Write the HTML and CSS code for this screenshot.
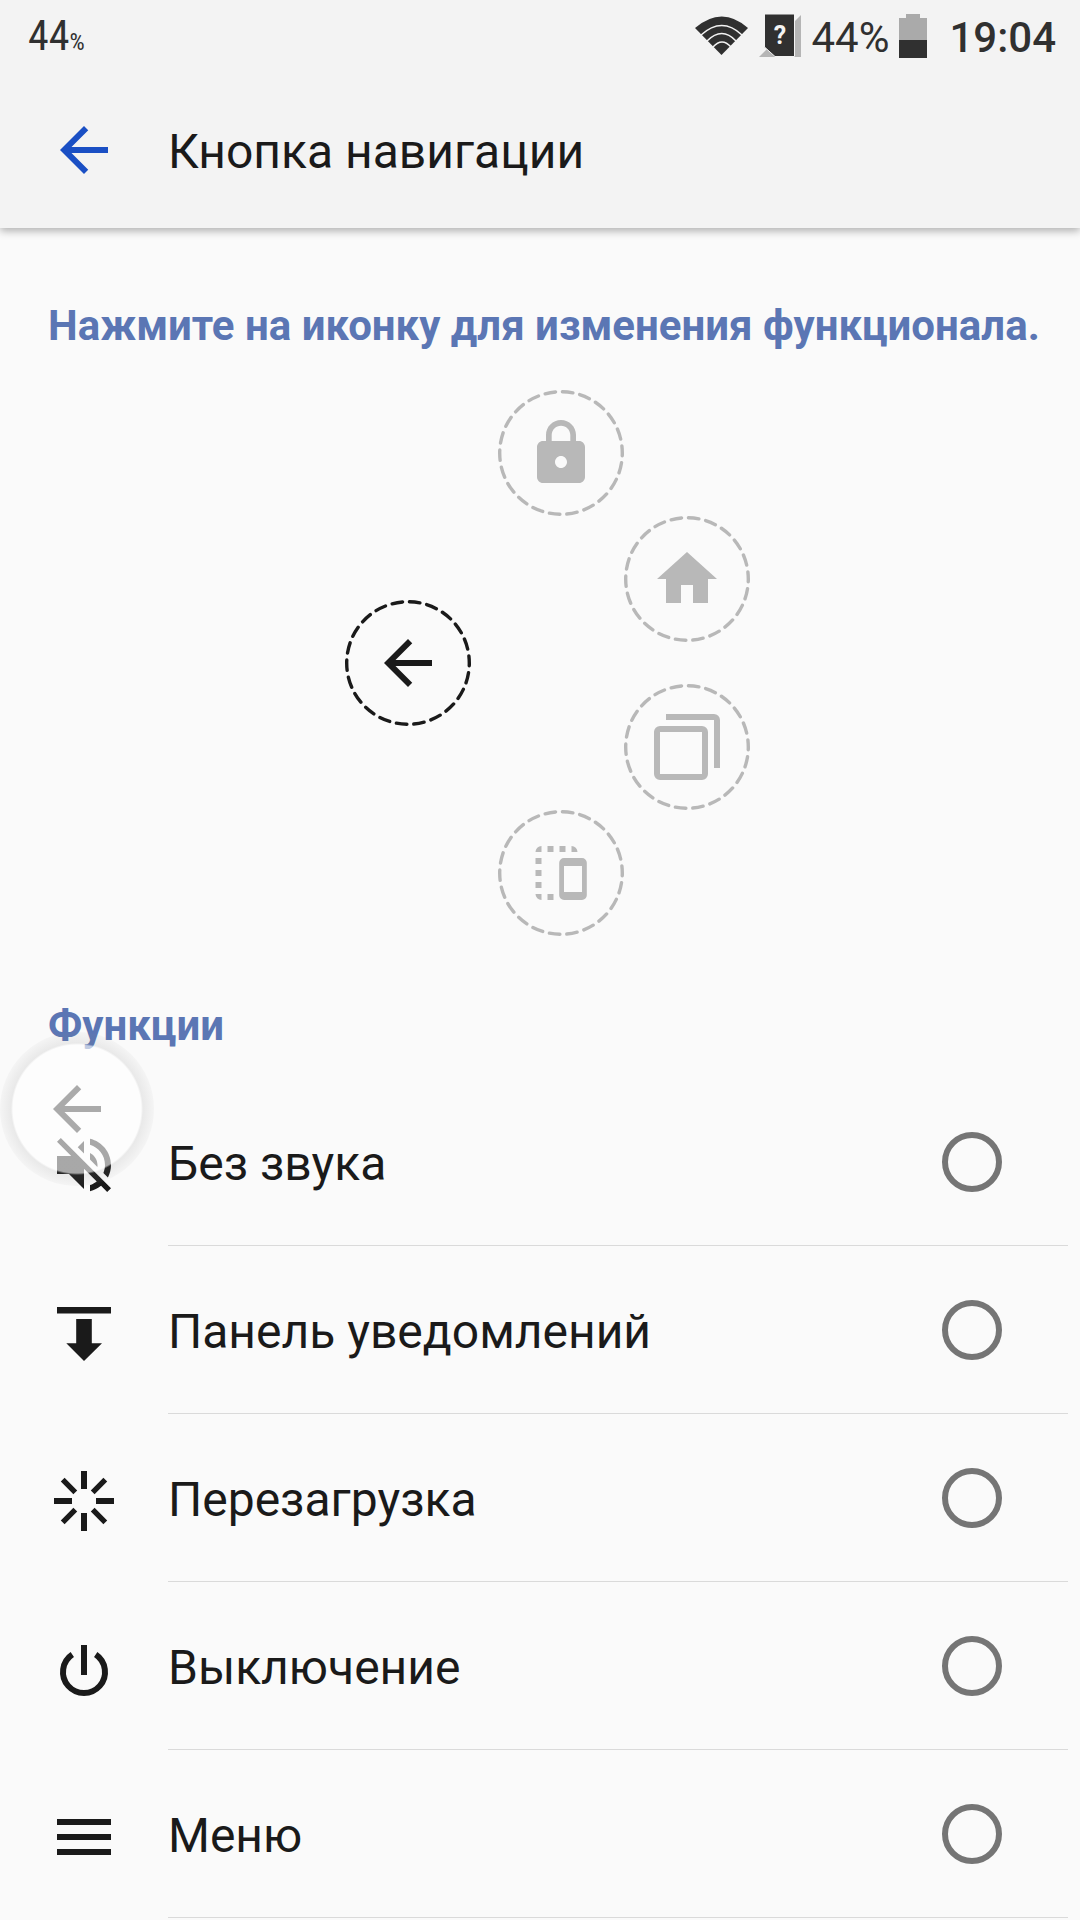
FILE: index.html
```html
<!DOCTYPE html>
<html lang="ru">
<head>
<meta charset="utf-8">
<meta name="viewport" content="width=device-width, initial-scale=1">
<title>Кнопка навигации</title>
<link rel="stylesheet" href="styles.css">
</head>
<body>
<header class="header">
  <div class="status">
    <span class="status-left">44<span class="status-unit">%</span></span>
    <div class="status-right">
      <svg class="wifi" viewBox="0 0 54 40" aria-hidden="true">
        <path fill="#303030" d="M0 12Q27 -11 53 12L26.500 39z"/>
        <g fill="none" stroke="#f3f3f3" stroke-width="1.5">
          <path d="M6 19Q27 0 47 19"/><path d="M12 25Q27 10 41 25"/><path d="M18 31Q27 21 36 31"/>
        </g>
      </svg>
      <svg class="sim" viewBox="0 0 42 44" aria-hidden="true">
        <path fill="#b5b5b5" d="M42 1v42H0z"/>
        <path fill="#303030" stroke="#f3f3f3" stroke-width="1" d="M5.500 0h30v42.500H16L5.500 33z"/>
        <text class="sim-mark" x="21" y="30" text-anchor="middle">?</text>
      </svg>
      <span class="status-percent">44%</span>
      <svg class="battery" viewBox="0 0 28 44" aria-hidden="true">
        <path fill="#aaa" d="M7 0h14v4h7v23H0V4h7z"/><path fill="#303030" d="M0 26h28v18H0z"/>
      </svg>
      <time class="clock">19:04</time>
    </div>
  </div>
  <div class="toolbar">
    <button class="back" type="button" aria-label="Назад">
      <svg class="icon" viewBox="0 0 24 24"><path d="M20 11H7.83l5.59-5.59L12 4l-8 8 8 8 1.41-1.41L7.83 13H20z"/></svg>
    </button>
    <h1 class="title">Кнопка навигации</h1>
  </div>
</header>
<main class="content">
  <h2 class="heading">Нажмите на иконку для изменения функционала.</h2>
  <div class="pad">
    <button class="node node-back" type="button" aria-label="Назад">
      <svg class="ring" viewBox="0 0 126 126"><circle cx="63" cy="63" r="61.3"/></svg>
      <svg class="icon" viewBox="0 0 24 24"><path d="M20 11H7.83l5.59-5.59L12 4l-8 8 8 8 1.41-1.41L7.83 13H20z"/></svg>
    </button>
    <button class="node node-lock" type="button" aria-label="Блокировка">
      <svg class="ring" viewBox="0 0 126 126"><circle cx="63" cy="63" r="61.3"/></svg>
      <svg class="icon" viewBox="0 0 24 24"><path d="M18 8h-1V6c0-2.76-2.24-5-5-5S7 3.24 7 6v2H6c-1.1 0-2 .9-2 2v10c0 1.1.9 2 2 2h12c1.1 0 2-.9 2-2V10c0-1.1-.9-2-2-2zm-6 9c-1.1 0-2-.9-2-2s.9-2 2-2 2 .9 2 2-.9 2-2 2zm3.1-9H8.9V6c0-1.71 1.39-3.1 3.1-3.1 1.71 0 3.1 1.39 3.1 3.1z"/></svg>
    </button>
    <button class="node node-home" type="button" aria-label="Домой">
      <svg class="ring" viewBox="0 0 126 126"><circle cx="63" cy="63" r="61.3"/></svg>
      <svg class="icon" viewBox="0 0 24 24"><path d="M10 20v-6h4v6h5v-8h3L12 3 2 12h3v8z"/></svg>
    </button>
    <button class="node node-recent" type="button" aria-label="Недавние">
      <svg class="ring" viewBox="0 0 126 126"><circle cx="63" cy="63" r="61.3"/></svg>
      <svg class="icon" viewBox="0 0 24 24"><path fill-rule="evenodd" d="M5 1h16a2 2 0 0 1 2 2v16h-2V3H5zM3 5h14a2 2 0 0 1 2 2v14a2 2 0 0 1-2 2H3a2 2 0 0 1-2-2V7a2 2 0 0 1 2-2zm0 2v14h14V7z"/></svg>
    </button>
    <button class="node node-mini" type="button" aria-label="Мини-экран">
      <svg class="ring" viewBox="0 0 126 126"><circle cx="63" cy="63" r="61.3"/></svg>
      <svg class="icon" viewBox="0 0 24 24"><path fill-rule="evenodd" d="M3.5 5a2 2 0 0 1 2-2v2zM7.5 3h2v2h-2zM11.5 3h2v2h-2zM15.5 3a2 2 0 0 1 2 2h-2zM3.5 7h2v2h-2zM3.5 11h2v2h-2zM3.5 15h2v2h-2zM3.5 19h2v2a2 2 0 0 1-2-2zM7.5 19h2v2h-2zM13 7h6a1.6 1.6 0 0 1 1.6 1.6v10.8A1.6 1.6 0 0 1 19 21h-6a1.6 1.6 0 0 1-1.6-1.6V8.600A1.6 1.6 0 0 1 13 7zm0 2.650v8.700h6V9.650z"/></svg>
    </button>
  </div>
  <h2 class="heading">Функции</h2>
  <ul class="list">
    <li><label class="row">
      <svg class="icon row-icon" viewBox="0 0 24 24"><path d="M16.500 12c0-1.770-1.020-3.290-2.500-4.030v2.210l2.450 2.450c.03-.2.05-.41.05-.63zm2.500 0c0 .94-.2 1.820-.54 2.640l1.510 1.510C20.630 14.910 21 13.500 21 12c0-4.280-2.990-7.860-7-8.770v2.060c2.890.86 5 3.540 5 6.710zM4.270 3L3 4.270 7.730 9H3v6h4l5 5v-6.730l4.250 4.250c-.67.52-1.420.93-2.250 1.180v2.060c1.380-.31 2.630-.95 3.690-1.810L19.730 21 21 19.730l-9-9zM12 4L9.910 6.090 12 8.180z"/></svg>
      <span class="row-body"><span class="row-text">Без звука</span><input class="radio" type="radio" name="action"></span>
    </label></li>
    <li><label class="row">
      <svg class="icon row-icon" viewBox="0 0 24 24"><path d="M3 3.300h18v2.200H3zM9.400 7.300h5.200v8.100h3.400l-6 5.900-5.900-5.900h3.300z"/></svg>
      <span class="row-body"><span class="row-text">Панель уведомлений</span><input class="radio" type="radio" name="action"></span>
    </label></li>
    <li><label class="row">
      <svg class="icon row-icon" viewBox="0 0 24 24"><path d="M11 2h2v6h-2zM11 16h2v6h-2zM2 11h6v2H2zM16 11h6v2h-6z"/><path fill="none" stroke="currentColor" stroke-width="1.800" d="M4.900 4.900l4.200 4.200M19.100 4.900l-4.200 4.200M4.900 19.100l4.200-4.200M19.100 19.100l-4.200-4.200"/></svg>
      <span class="row-body"><span class="row-text">Перезагрузка</span><input class="radio" type="radio" name="action"></span>
    </label></li>
    <li><label class="row">
      <svg class="icon row-icon" viewBox="0 0 24 24"><path d="M11 4h2v10h-2z"/><path fill="none" stroke="currentColor" stroke-width="2" d="M8.100 7.190A7 7 0 1 0 15.900 7.190"/></svg>
      <span class="row-body"><span class="row-text">Выключение</span><input class="radio" type="radio" name="action"></span>
    </label></li>
    <li><label class="row">
      <svg class="icon row-icon" viewBox="0 0 24 24"><path d="M3 6h18v2H3zM3 11h18v2H3zM3 16h18v2H3z"/></svg>
      <span class="row-body"><span class="row-text">Меню</span><input class="radio" type="radio" name="action"></span>
    </label></li>
  </ul>
</main>
<button class="floating" type="button" aria-label="Плавающая кнопка">
  <svg class="icon" viewBox="0 0 24 24"><path d="M20 11H7.83l5.59-5.59L12 4l-8 8 8 8 1.41-1.41L7.83 13H20z"/></svg>
</button>
</body>
</html>
```
FILE: styles.css
```css
* {
  box-sizing: border-box;
}

body {
  margin: 0;
  background: #fafafa;
  color: #1a1a1a;
  font-family: Roboto, "Noto Sans", sans-serif;
  font-size: 48px;
  line-height: 56px;
}

button {
  padding: 0;
  border: 0;
  background: none;
  color: inherit;
  font: inherit;
}

.icon {
  display: block;
  flex: none;
  width: 72px;
  height: 72px;
  fill: currentColor;
}

.header {
  position: relative;
  background: #f3f3f3;
  box-shadow: 0 3px 8px rgba(0, 0, 0, 0.3);
}

.status {
  display: flex;
  justify-content: space-between;
  align-items: center;
  height: 72px;
  padding: 0 24px 0 28px;
  color: #303030;
  font-size: 42px;
}

.status-left {
  margin-top: 6px;
  font-family: "Roboto Condensed", "Liberation Sans Narrow", Roboto, sans-serif;
}

.status-unit {
  font-size: 24px;
}

.status-right {
  display: flex;
  align-items: center;
}

.status-percent,
.clock {
  margin-top: 4px;
}

.wifi {
  width: 54px;
  height: 40px;
  margin-right: 10px;
}

.sim {
  width: 42px;
  height: 44px;
  margin-right: 10px;
}

.sim-mark {
  fill: #f3f3f3;
  font-size: 25px;
  font-weight: 700;
}

.battery {
  width: 28px;
  height: 44px;
  margin: 0 22px 0 10px;
}

.clock {
  font-weight: 500;
}

.toolbar {
  display: flex;
  align-items: center;
  gap: 48px;
  height: 156px;
  padding: 0 48px;
}

.back {
  color: #1a4fc4;
}

.title {
  margin: 4px 0 0;
  font-size: 48px;
  font-weight: 400;
}

.content {
  padding-top: 72px;
}

.heading {
  margin: 0;
  padding-left: 48px;
  color: #5b76b4;
  font-size: 42px;
  font-weight: 700;
  line-height: 52px;
  white-space: nowrap;
}

.pad {
  display: grid;
  grid-template-columns: 153px 126px 126px;
  grid-template-rows: 126px 168px 126px 126px;
  justify-content: center;
  padding: 38px 0 64px 15px;
  color: #b8b8b8;
}

.node {
  display: grid;
  place-items: center;
  width: 126px;
  height: 126px;
}

.node > * {
  grid-area: 1 / 1;
}

.node-back {
  grid-area: 1 / 1 / 5 / 2;
  align-self: center;
  color: #1a1a1a;
}

.node-lock {
  grid-area: 1 / 2;
}

.node-home {
  grid-area: 2 / 3;
}

.node-recent {
  grid-area: 3 / 3;
}

.node-mini {
  grid-area: 4 / 2;
}

.ring {
  display: block;
  width: 126px;
  height: 126px;
  fill: none;
  stroke: currentColor;
  stroke-width: 3.4;
  stroke-linecap: round;
  stroke-dasharray: 10.5 7.007;
  stroke-dashoffset: 7.75;
}

.list {
  margin: 0;
  padding: 26px 12px 0 48px;
  list-style: none;
}

.row {
  display: flex;
  align-items: center;
  gap: 48px;
}

.row-icon {
  margin-top: 6px;
}

.row-body {
  display: flex;
  flex: 1;
  align-items: center;
  justify-content: space-between;
  height: 168px;
  padding-right: 66px;
  border-bottom: 1px solid #dadada;
}

.row-text {
  margin-top: 4px;
}

.radio {
  appearance: none;
  width: 60px;
  height: 60px;
  margin: 0;
  border: 6px solid #757575;
  border-radius: 50%;
}

.radio:checked {
  background: #757575;
  box-shadow: inset 0 0 0 8px #fafafa;
}

.floating {
  position: absolute;
  top: 1032px;
  left: 0;
  display: flex;
  align-items: center;
  justify-content: center;
  width: 154px;
  height: 154px;
  border-radius: 50%;
  background: radial-gradient(circle closest-side, rgba(255, 255, 255, 0.62) 64px, rgba(120, 120, 120, 0.13) 66px, rgba(140, 140, 140, 0.05) 77px);
  color: #aaa;
}
```
